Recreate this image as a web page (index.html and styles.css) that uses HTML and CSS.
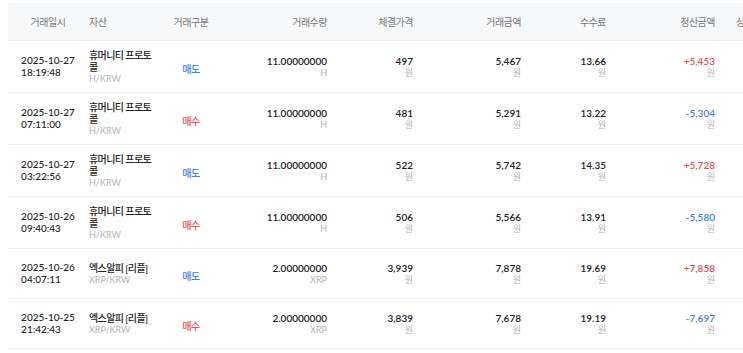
FILE: index.html
```html
<!DOCTYPE html>
<html lang="ko">
<head>
  <meta charset="UTF-8"/>
  <meta name="viewport" content="width=device-width,initial-scale=1"/>
  <title>거래내역</title>
  <link rel="stylesheet" href="styles.css">
</head>
<body>

  <div class="history">
    <table class="trades">
      <colgroup>
        <col class="w-date"><col class="w-asset"><col class="w-side"><col class="w-qty">
        <col class="w-price"><col class="w-amount"><col class="w-fee"><col class="w-settle"><col class="w-state">
      </colgroup>
      <thead>
        <tr>
          <th class="c-date">거래일시</th>
          <th class="c-asset">자산</th>
          <th class="c-side">거래구분</th>
          <th class="num">거래수량</th>
          <th class="num">체결가격</th>
          <th class="num">거래금액</th>
          <th class="num">수수료</th>
          <th class="num">정산금액</th>
          <th class="c-state">상태</th>
        </tr>
      </thead>
      <tbody>
        <tr>
          <td class="c-date"><div class="date">2025-10-27<br>18:19:48</div></td>
          <td class="c-asset"><div class="asset-name">휴머니티 프로토콜</div><div class="pair">H/KRW</div></td>
          <td class="c-side"><span class="side sell">매도</span></td>
          <td class="num"><div class="val">11.00000000</div><div class="unit">H</div></td>
          <td class="num"><div class="val">497</div><div class="unit">원</div></td>
          <td class="num"><div class="val">5,467</div><div class="unit">원</div></td>
          <td class="num"><div class="val">13.66</div><div class="unit">원</div></td>
          <td class="num"><div class="val plus">+5,453</div><div class="unit">원</div></td>
          <td class="c-state"></td>
        </tr>
        <tr>
          <td class="c-date"><div class="date">2025-10-27<br>07:11:00</div></td>
          <td class="c-asset"><div class="asset-name">휴머니티 프로토콜</div><div class="pair">H/KRW</div></td>
          <td class="c-side"><span class="side buy">매수</span></td>
          <td class="num"><div class="val">11.00000000</div><div class="unit">H</div></td>
          <td class="num"><div class="val">481</div><div class="unit">원</div></td>
          <td class="num"><div class="val">5,291</div><div class="unit">원</div></td>
          <td class="num"><div class="val">13.22</div><div class="unit">원</div></td>
          <td class="num"><div class="val minus">-5,304</div><div class="unit">원</div></td>
          <td class="c-state"></td>
        </tr>
        <tr>
          <td class="c-date"><div class="date">2025-10-27<br>03:22:56</div></td>
          <td class="c-asset"><div class="asset-name">휴머니티 프로토콜</div><div class="pair">H/KRW</div></td>
          <td class="c-side"><span class="side sell">매도</span></td>
          <td class="num"><div class="val">11.00000000</div><div class="unit">H</div></td>
          <td class="num"><div class="val">522</div><div class="unit">원</div></td>
          <td class="num"><div class="val">5,742</div><div class="unit">원</div></td>
          <td class="num"><div class="val">14.35</div><div class="unit">원</div></td>
          <td class="num"><div class="val plus">+5,728</div><div class="unit">원</div></td>
          <td class="c-state"></td>
        </tr>
        <tr>
          <td class="c-date"><div class="date">2025-10-26<br>09:40:43</div></td>
          <td class="c-asset"><div class="asset-name">휴머니티 프로토콜</div><div class="pair">H/KRW</div></td>
          <td class="c-side"><span class="side buy">매수</span></td>
          <td class="num"><div class="val">11.00000000</div><div class="unit">H</div></td>
          <td class="num"><div class="val">506</div><div class="unit">원</div></td>
          <td class="num"><div class="val">5,566</div><div class="unit">원</div></td>
          <td class="num"><div class="val">13.91</div><div class="unit">원</div></td>
          <td class="num"><div class="val minus">-5,580</div><div class="unit">원</div></td>
          <td class="c-state"></td>
        </tr>
        <tr>
          <td class="c-date"><div class="date">2025-10-26<br>04:07:11</div></td>
          <td class="c-asset"><div class="asset-name">엑스알피 [리플]</div><div class="pair">XRP/KRW</div></td>
          <td class="c-side"><span class="side sell">매도</span></td>
          <td class="num"><div class="val">2.00000000</div><div class="unit">XRP</div></td>
          <td class="num"><div class="val">3,939</div><div class="unit">원</div></td>
          <td class="num"><div class="val">7,878</div><div class="unit">원</div></td>
          <td class="num"><div class="val">19.69</div><div class="unit">원</div></td>
          <td class="num"><div class="val plus">+7,858</div><div class="unit">원</div></td>
          <td class="c-state"></td>
        </tr>
        <tr>
          <td class="c-date"><div class="date">2025-10-25<br>21:42:43</div></td>
          <td class="c-asset"><div class="asset-name">엑스알피 [리플]</div><div class="pair">XRP/KRW</div></td>
          <td class="c-side"><span class="side buy">매수</span></td>
          <td class="num"><div class="val">2.00000000</div><div class="unit">XRP</div></td>
          <td class="num"><div class="val">3,839</div><div class="unit">원</div></td>
          <td class="num"><div class="val">7,678</div><div class="unit">원</div></td>
          <td class="num"><div class="val">19.19</div><div class="unit">원</div></td>
          <td class="num"><div class="val minus">-7,697</div><div class="unit">원</div></td>
          <td class="c-state"></td>
        </tr>
      </tbody>
    </table>
  </div>

</body>
</html>
```

FILE: styles.css
```css
:root {
  --text: #222;
  --muted: #b3b3b3;
  --head-text: #777;
  --head-bg: #f7f8fa;
  --line: #eef0f2;
  --buy: #ee4f52;
  --sell: #3d80f2;
  --font: 'Lato', 'Noto Sans CJK KR', sans-serif;
}
* { margin:0; padding:0; box-sizing:border-box }
html, body { width:100%; height:100%; overflow:hidden; background:#fff }
body { font-family: var(--font); color: var(--text) }

.history { padding:3px 0 0 8px; overflow:hidden }

/* Table */
.trades {
  width:892px;
  border-collapse:collapse;
  table-layout:fixed;
}
.w-date   { width:80px }
.w-asset  { width:72px }
.w-side   { width:62px }
.w-qty    { width:117px }
.w-price  { width:86px }
.w-amount { width:108px }
.w-fee    { width:85px }
.w-settle { width:109px }
.w-state  { width:173px }

.trades th {
  height:37px;
  padding:0 12px;
  background: var(--head-bg);
  border-bottom:1px solid var(--line);
  color: var(--head-text);
  font-size:10px;
  font-weight:400;
  letter-spacing:-0.5px;
  text-align:left;
}
.trades td {
  height:50px;
  padding:8px 12px;
  border-bottom:1px solid var(--line);
  vertical-align:middle;
}

/* Columns */
.trades .c-date  { padding-left:0; padding-right:0; text-align:center }
.trades .c-asset { padding-left:1px; padding-right:4px }
.trades .c-side  { padding-left:0; padding-right:0; text-align:center }
.trades .num     { text-align:right }
.trades th.c-state { padding-left:9px }

.date {
  display:inline-block;
  text-align:left;
  font-size:10px;
  font-weight:500;
  line-height:12px;
}
.asset-name {
  font-size:10px;
  font-weight:500;
  letter-spacing:-0.6px;
  line-height:12px;
}
.pair {
  font-size:9px;
  color: var(--muted);
  line-height:11px;
}
.side {
  font-size:10px;
  font-weight:500;
  letter-spacing:-0.5px;
}
.side.sell { color: var(--sell) }
.side.buy  { color: var(--buy) }

.val {
  font-size:10px;
  font-weight:600;
  line-height:12px;
}
.val.plus  { color: var(--buy) }
.val.minus { color: var(--sell) }
.unit {
  font-size:9px;
  color: var(--muted);
  line-height:11px;
}
```
